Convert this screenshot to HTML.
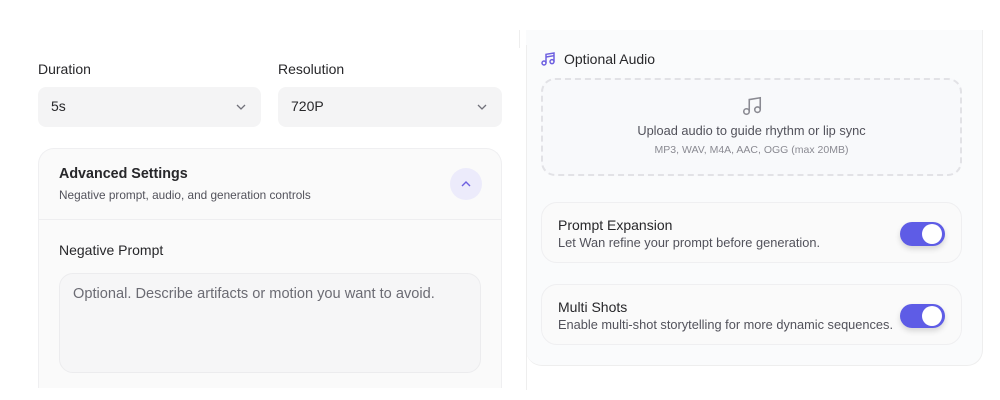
<!DOCTYPE html>
<html><head><style>
*{box-sizing:border-box;margin:0;padding:0}
body{width:1000px;height:400px;background:#fff;font-family:"Liberation Sans",sans-serif;position:relative;overflow:hidden;color:#18181b}
.abs{position:absolute}
.lbl{font-size:14px;font-weight:500;color:#27272a}
.sel{background:#f4f4f5;border-radius:8px;height:40px;font-size:14px;color:#27272a;padding:11px 13px}
.chev{position:absolute;right:14px;top:14px}
.card{background:#fafafa;border:1px solid #efeff1;border-radius:16px}
.tog{position:absolute;right:16px;top:19px;width:45px;height:24px;border-radius:12px;background:#5e5ce6;box-shadow:0 3px 6px rgba(0,0,0,.15)}
.tog:after{content:"";position:absolute;right:3px;top:2px;width:20px;height:20px;border-radius:50%;background:#fff}
.tt{font-size:14px;color:#27272a;font-weight:500}
.ts{font-size:12.8px;color:#52525b;margin-top:2px}
</style></head><body>
<div class="abs lbl" style="left:38px;top:61px">Duration</div>
<div class="abs lbl" style="left:278px;top:61px">Resolution</div>
<div class="abs sel" style="left:38px;top:87px;width:223px">5s<svg class="chev" width="12" height="12" viewBox="0 0 12 12"><path d="M2 4l4 4 4-4" fill="none" stroke="#71717a" stroke-width="1.3"/></svg></div>
<div class="abs sel" style="left:278px;top:87px;width:224px">720P<svg class="chev" width="12" height="12" viewBox="0 0 12 12"><path d="M2 4l4 4 4-4" fill="none" stroke="#71717a" stroke-width="1.3"/></svg></div>

<div class="abs card" style="left:38px;top:148px;width:464px;height:240px;border-radius:16px 16px 0 0;border-bottom:none">
 <div style="height:71px;border-bottom:1px solid #eeeef0;padding:17px 20px 0">
  <div style="font-size:14.3px;font-weight:700;color:#27272a">Advanced Settings</div>
  <div style="font-size:11.8px;color:#52525b;margin-top:6px">Negative prompt, audio, and generation controls</div>
 </div>
 <div class="abs" style="left:411px;top:19px;width:32px;height:32px;border-radius:50%;background:#ecebfb"><svg width="32" height="32" viewBox="0 0 32 32"><path d="M12 18l4-4 4 4" fill="none" stroke="#6d5fe0" stroke-width="1.4"/></svg></div>
 <div class="abs lbl" style="left:20px;top:93px">Negative Prompt</div>
 <div class="abs" style="left:20px;top:124px;width:422px;height:100px;background:#f6f6f7;border:1px solid #ececee;border-radius:14px;padding:12px 13px;font-size:14.6px;color:#6b6b73">Optional. Describe artifacts or motion you want to avoid.</div>
</div>

<div class="abs" style="left:519px;top:30px;width:1px;height:18px;background:#eee"></div>
<div class="abs" style="left:526px;top:30px;width:457px;height:336px;background:#fafbfc;border-right:1px solid #eee;border-bottom:1px solid #eee;border-radius:0 0 16px 16px"></div>
<div class="abs" style="left:526px;top:45px;width:1px;height:345px;background:#eee"></div>
<svg class="abs" style="left:540px;top:51px" width="16" height="16" viewBox="0 0 24 24"><path d="M9 18V5l12-2v13" fill="none" stroke="#6d5fe0" stroke-width="2.2"/><circle cx="6" cy="18" r="3" fill="none" stroke="#6d5fe0" stroke-width="2.2"/><circle cx="18" cy="16" r="3" fill="none" stroke="#6d5fe0" stroke-width="2.2"/><path d="M9 9l12-2" stroke="#6d5fe0" stroke-width="2.2"/></svg>
<div class="abs" style="left:564px;top:51px;font-size:14px;font-weight:500;color:#27272a">Optional Audio</div>
<div class="abs" style="left:541px;top:78px;width:421px;height:98px;border:2px dashed #e2e2e6;border-radius:14px;text-align:center;background:#f8f9fb">
 <svg style="margin-top:15px" width="22" height="22" viewBox="0 0 24 24"><path d="M9 18V5l12-2v13" fill="none" stroke="#8a8a92" stroke-width="1.7"/><circle cx="6" cy="18" r="3" fill="none" stroke="#8a8a92" stroke-width="1.7"/><circle cx="18" cy="16" r="3" fill="none" stroke="#8a8a92" stroke-width="1.7"/></svg>
 <div style="font-size:12.8px;color:#52525b;margin-top:1px">Upload audio to guide rhythm or lip sync</div>
 <div style="font-size:10.5px;color:#8a8a92;margin-top:6px">MP3, WAV, M4A, AAC, OGG (max 20MB)</div>
</div>
<div class="abs card" style="left:541px;top:202px;width:421px;height:61px;padding:14px 16px">
 <div class="tt">Prompt Expansion</div><div class="ts">Let Wan refine your prompt before generation.</div><div class="tog"></div></div>
<div class="abs card" style="left:541px;top:284px;width:421px;height:61px;padding:14px 16px">
 <div class="tt">Multi Shots</div><div class="ts">Enable multi-shot storytelling for more dynamic sequences.</div><div class="tog"></div></div>
</body></html>
